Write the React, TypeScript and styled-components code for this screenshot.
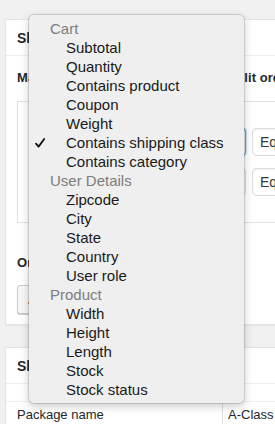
import React from 'react';
import styled, { createGlobalStyle } from 'styled-components';

const Global = createGlobalStyle`
  html, body { margin: 0; padding: 0; background: #f1f1f1; overflow: hidden; }
  body { font-family: "Liberation Sans", Arial, sans-serif; color: #23282d; font-size: 13px; }
`;

const Page = styled.div`
  position: relative;
  width: 275px;
  height: 424px;
  overflow: hidden;
  box-sizing: border-box;
  padding: 19px 0 0 5px;
  display: flex;
  flex-direction: column;
  gap: 22px;
`;

const Panel = styled.section`
  flex-shrink: 0;
  width: 440px;
  box-sizing: border-box;
  background: #fff;
  border: 1px solid #e5e5e5;
  box-shadow: 0 1px 1px rgba(0, 0, 0, 0.04);
`;

const PanelHeader = styled.h2`
  margin: 0;
  height: 36px;
  box-sizing: border-box;
  border-bottom: 1px solid #eee;
  padding: 0 11px;
  display: flex;
  align-items: center;
  font-size: 14px;
  font-weight: 700;
  color: #23282d;
`;

const PanelBody = styled.div<{ $pad: string }>`
  padding: ${(p) => p.$pad};
`;

const Label = styled.p<{ $mt?: number }>`
  margin: ${(p) => p.$mt ?? 0}px 0 0;
  font-size: 13px;
  font-weight: 700;
  line-height: 16px;
  letter-spacing: 0.07px;
  white-space: nowrap;
`;

const GroupBox = styled.div`
  margin-top: 15px;
  height: 122px;
  box-sizing: border-box;
  border: 1px solid #e1e1e1;
  padding: 26px 0 0 23px;
  display: flex;
  flex-direction: column;
  gap: 12px;
`;

const RuleRow = styled.div`
  display: flex;
  gap: 6px;
`;

const Select = styled.div<{ $w: number; $focus?: boolean }>`
  width: ${(p) => p.$w}px;
  height: 28px;
  box-sizing: border-box;
  background: #fff;
  border: 1px solid ${(p) => (p.$focus ? '#5b9dd9' : '#ddd')};
  box-shadow: ${(p) => (p.$focus ? '0 0 2px rgba(30,140,190,0.8)' : '0 1px 2px rgba(0,0,0,0.07) inset')};
  border-radius: 4px;
  padding: 0 7px;
  display: flex;
  align-items: center;
  font-size: 14px;
  color: #32373c;
  white-space: nowrap;
  overflow: hidden;
`;

const Button = styled.button`
  margin-top: 14px;
  height: 29px;
  padding: 0 10px;
  border: 1px solid #ccc;
  border-radius: 3px;
  background: #f7f7f7;
  box-shadow: 0 1px 0 #ccc;
  font-family: inherit;
  font-size: 13px;
  color: #555;
  display: flex;
  align-items: center;
`;

const Table = styled.div`
  display: grid;
  grid-template-columns: 216px 1fr;
  border-top: 1px solid #eee;
`;

const Cell = styled.div<{ $divider?: boolean }>`
  padding: 5px ${(p) => (p.$divider ? 5 : 11)}px;
  line-height: 16px;
  font-size: 13px;
  color: #23282d;
  white-space: nowrap;
  border-left: ${(p) => (p.$divider ? '1px solid #e1e1e1' : 'none')};
  min-height: 40px;
`;

const Menu = styled.ul`
  position: absolute;
  left: 29px;
  top: 15px;
  width: 215px;
  margin: 0;
  padding: 4px 0 4px;
  list-style: none;
  background: #efefef;
  border-radius: 5px;
  box-shadow: 0 0 0 1px rgba(0, 0, 0, 0.13), 0 3px 10px rgba(0, 0, 0, 0.22);
  font-family: "Liberation Sans", Arial, sans-serif;
  font-size: 15px;
`;

const MenuGroup = styled.li`
  height: 19px;
  line-height: 19px;
  padding-left: 21px;
  color: #7d7d7d;
`;

const MenuItem = styled.li`
  position: relative;
  height: 19px;
  line-height: 19px;
  padding-left: 37px;
  color: #1a1a1a;
`;

const Check = styled.svg`
  position: absolute;
  left: 6px;
  top: 5px;
  width: 10px;
  height: 10px;
`;

type Entry = { label: string; group?: boolean; checked?: boolean };

const entries: Entry[] = [
  { label: 'Cart', group: true },
  { label: 'Subtotal' },
  { label: 'Quantity' },
  { label: 'Contains product' },
  { label: 'Coupon' },
  { label: 'Weight' },
  { label: 'Contains shipping class', checked: true },
  { label: 'Contains category' },
  { label: 'User Details', group: true },
  { label: 'Zipcode' },
  { label: 'City' },
  { label: 'State' },
  { label: 'Country' },
  { label: 'User role' },
  { label: 'Product', group: true },
  { label: 'Width' },
  { label: 'Height' },
  { label: 'Length' },
  { label: 'Stock' },
  { label: 'Stock status' },
];

export default function App() {
  return (
    <>
      <Global />
      <Page>
        <Panel style={{ height: 306 }}>
          <PanelHeader>Shipping package conditions</PanelHeader>
          <PanelBody $pad="14px 0 0 11px">
            <Label>Match all of the following rules to split order</Label>
            <GroupBox>
              <RuleRow>
                <Select $w={205} $focus>Contains shipping class</Select>
                <Select $w={150}>Equal to</Select>
              </RuleRow>
              <RuleRow>
                <Select $w={205}>Subtotal</Select>
                <Select $w={150}>Equal to</Select>
              </RuleRow>
            </GroupBox>
            <Label $mt={32}>Or</Label>
            <Button>Add 'Or' group</Button>
          </PanelBody>
        </Panel>
        <Panel>
          <PanelHeader>Shipping package settings</PanelHeader>
          <PanelBody $pad="17px 0 0 0">
            <Table>
              <Cell>Package name</Cell>
              <Cell $divider>A-Class</Cell>
            </Table>
          </PanelBody>
        </Panel>
        <Menu>
          {entries.map((e) =>
            e.group ? (
              <MenuGroup key={e.label}>{e.label}</MenuGroup>
            ) : (
              <MenuItem key={e.label}>
                {e.checked && (
                  <Check viewBox="0 0 10 10">
                    <path d="M1 5.6 L3.6 8.6 L9.2 1" fill="none" stroke="#111" strokeWidth="1.8" strokeLinecap="round" strokeLinejoin="round" />
                  </Check>
                )}
                {e.label}
              </MenuItem>
            )
          )}
        </Menu>
      </Page>
    </>
  );
}
